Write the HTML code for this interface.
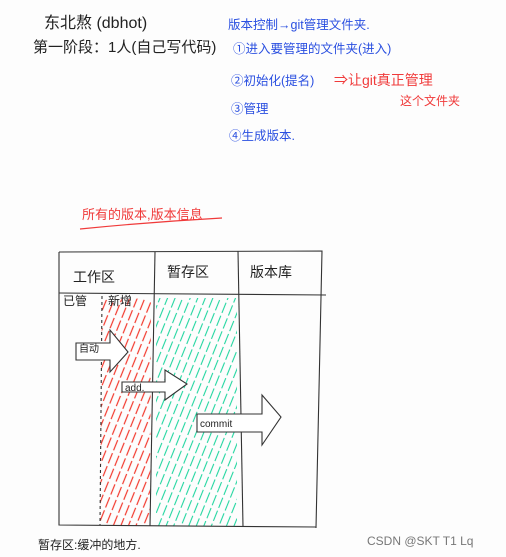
<!DOCTYPE html>
<html><head><meta charset="utf-8"><style>
html,body{margin:0;padding:0;background:#fff;}
body{width:506px;height:557px;overflow:hidden;position:relative;font-family:"Liberation Sans","Noto Sans CJK SC",sans-serif;}
svg{position:absolute;left:0;top:0;}
</style></head><body>
<svg width="506" height="557" viewBox="0 0 506 557">
<defs>
<pattern id="red" width="7" height="14" patternUnits="userSpaceOnUse" patternTransform="rotate(22)">
<line x1="1" y1="0" x2="1" y2="11" stroke="#f23a2e" stroke-width="1.2"/>
</pattern>
<pattern id="grn" width="7" height="14" patternUnits="userSpaceOnUse" patternTransform="rotate(22)">
<line x1="1" y1="0" x2="1" y2="11" stroke="#22d6a0" stroke-width="1.1"/>
</pattern>
</defs>
<rect width="506" height="557" fill="#fdfdfd"/>
<g font-family="'Liberation Sans','Noto Sans CJK SC',sans-serif">
<text x="44" y="28" font-size="16" fill="#222">东北熬 (dbhot)</text>
<text x="33" y="52" font-size="15" fill="#222">第一阶段：1人(自己写代码)</text>
<g fill="#2a4fe0" font-size="12.5">
<text x="228" y="29">版本控制→git管理文件夹.</text>
<text x="233" y="53">①进入要管理的文件夹(进入)</text>
<text x="231" y="85">②初始化(提名)</text>
<text x="231" y="113">③管理</text>
<text x="229" y="140">④生成版本.</text>
</g>
<text x="334" y="85" font-size="14" fill="#f03a3a">⇒让git真正管理</text>
<text x="400" y="105" font-size="12" fill="#f03a3a">这个文件夹</text>
<text x="82" y="219" font-size="13" fill="#f03a3a">所有的版本,版本信息</text>
<path d="M80 229 Q150 222 222 218" stroke="#f03a3a" stroke-width="1.2" fill="none"/>
</g>
<polygon points="102,300 151,298 150,526 100,525" fill="url(#red)"/>
<polygon points="156,298 237,298 237,526 156,526" fill="url(#grn)"/>
<g stroke="#333" stroke-width="1.1" fill="none">
<path d="M59 252 L322 251 L316 528"/>
<path d="M59 252 L59 525 L316 527"/>
<path d="M59 293 L326 295"/>
<path d="M155 252 L150 526"/>
<path d="M238 251 L243 527"/>
<path d="M102 296 L100 525" stroke-dasharray="3,3"/>
</g>
<g font-size="14" fill="#222">
<text x="73" y="282">工作区</text>
<text x="167" y="277">暂存区</text>
<text x="250" y="277">版本库</text>
<text x="63" y="305" font-size="12">已管</text>
<text x="108" y="305" font-size="12">新增</text>
</g>
<g stroke="#333" stroke-width="1.1" fill="#fff">
<path d="M76 343 L110 343 L110 330 L128 352 L110 372 L110 360 L76 360 Z"/>
<path d="M122 382 L165 382 L165 370 L187 384 L165 400 L165 392 L122 392 Z"/>
<path d="M197 414 L262 414 L262 395 L281 417 L262 445 L262 432 L197 432 Z"/>
</g>
<g font-size="10" fill="#222">
<text x="79" y="352">自动</text>
<text x="125" y="391">add.</text>
<text x="200" y="427">commit</text>
</g>
<text x="38" y="549" font-size="12" fill="#222" font-family="'Liberation Sans','Noto Sans CJK SC',sans-serif">暂存区:缓冲的地方.</text>
<text x="367" y="545" font-size="12" fill="#777" font-family="'Liberation Sans','Noto Sans CJK SC',sans-serif">CSDN @SKT T1 Lq</text>
</svg>
</body></html>
